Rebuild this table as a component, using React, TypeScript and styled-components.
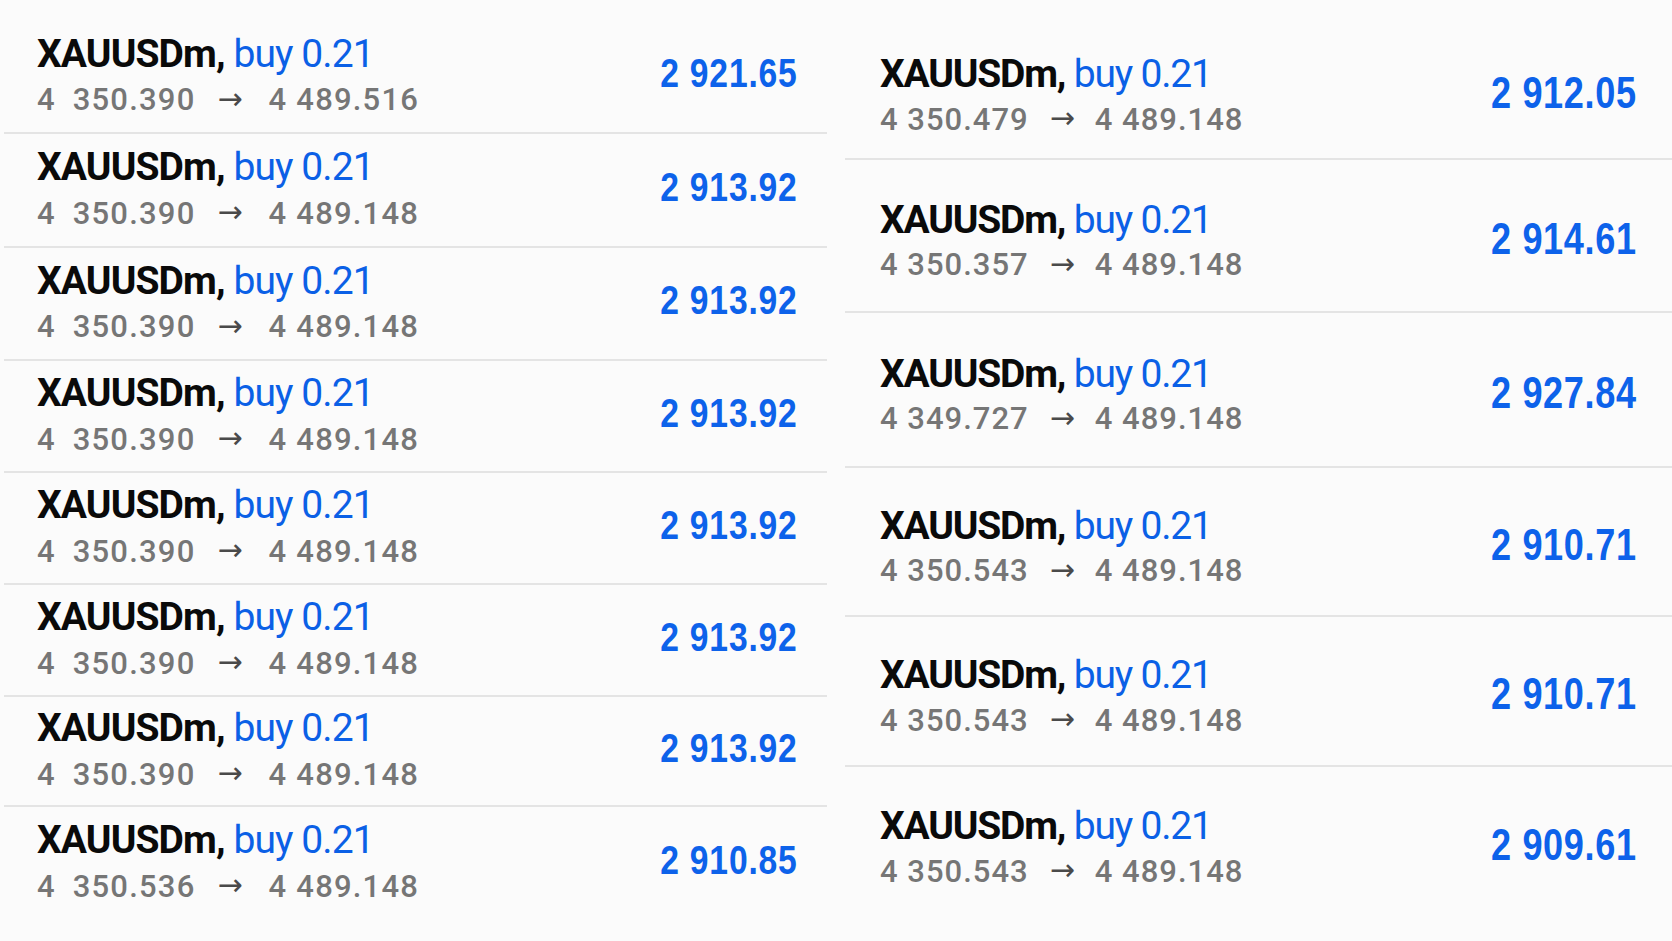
import styled, { createGlobalStyle } from "styled-components";

interface Trade {
  open: string;
  close: string;
  profit: string;
}

const leftTrades: Trade[] = [
  { open: "4 350.390", close: "4 489.516", profit: "2 921.65" },
  { open: "4 350.390", close: "4 489.148", profit: "2 913.92" },
  { open: "4 350.390", close: "4 489.148", profit: "2 913.92" },
  { open: "4 350.390", close: "4 489.148", profit: "2 913.92" },
  { open: "4 350.390", close: "4 489.148", profit: "2 913.92" },
  { open: "4 350.390", close: "4 489.148", profit: "2 913.92" },
  { open: "4 350.390", close: "4 489.148", profit: "2 913.92" },
  { open: "4 350.536", close: "4 489.148", profit: "2 910.85" },
];
const leftHeights = [113, 114, 113, 112, 112, 112, 110, 112];

const rightTrades: Trade[] = [
  { open: "4 350.479", close: "4 489.148", profit: "2 912.05" },
  { open: "4 350.357", close: "4 489.148", profit: "2 914.61" },
  { open: "4 349.727", close: "4 489.148", profit: "2 927.84" },
  { open: "4 350.543", close: "4 489.148", profit: "2 910.71" },
  { open: "4 350.543", close: "4 489.148", profit: "2 910.71" },
  { open: "4 350.543", close: "4 489.148", profit: "2 909.61" },
];
const rightHeights = [138, 153, 155, 149, 150, 150];

export default function App() {
  return (
    <>
      <GlobalStyle />
      <Page>
        <Column $side="left">
          {leftTrades.map((t, i) => (
            <TradeRow key={i} trade={t} height={leftHeights[i]} wide />
          ))}
        </Column>
        <Column $side="right">
          {rightTrades.map((t, i) => (
            <TradeRow key={i} trade={t} height={rightHeights[i]} />
          ))}
        </Column>
      </Page>
    </>
  );
}

function TradeRow({
  trade,
  height,
  wide,
}: {
  trade: Trade;
  height: number;
  wide?: boolean;
}) {
  return (
    <Row $height={height} $wide={!!wide}>
      <div className="info">
        <Title $wide={!!wide}>
          XAUUSDm, <span>buy 0.21</span>
        </Title>
        <Prices $wide={!!wide}>
          <Price $wide={!!wide}>{trade.open}</Price>
          <Arrow $wide={!!wide}>→</Arrow>
          <Price>{trade.close}</Price>
        </Prices>
      </div>
      <Profit $wide={!!wide}>{trade.profit}</Profit>
    </Row>
  );
}

const GlobalStyle = createGlobalStyle`
  html, body {
    margin: 0;
    padding: 0;
    background: #fbfbfb;
    font-family: Roboto, "Liberation Sans", sans-serif;
  }
`;

const Page = styled.div`
  display: flex;
  width: 1672px;
  height: 941px;
  overflow: hidden;
  background: #fbfbfb;
`;

const Column = styled.div<{ $side: "left" | "right" }>`
  display: flex;
  flex-direction: column;
  box-sizing: border-box;
  width: ${(p) => (p.$side === "left" ? "823px" : "827px")};
  margin-left: ${(p) => (p.$side === "left" ? "4px" : "18px")};
  padding-top: ${(p) => (p.$side === "left" ? "21px" : "22px")};
`;

const Row = styled.div<{ $height: number; $wide: boolean }>`
  display: flex;
  align-items: center;
  justify-content: space-between;
  box-sizing: border-box;
  height: ${(p) => p.$height}px;
  flex: none;
  padding: ${(p) => (p.$wide ? "0 29px 0 33px" : "12px 35px 0 35px")};
  border-bottom: 2px solid #e4e4e4;

  &:last-child {
    border-bottom: none;
  }

  .info {
    display: flex;
    flex-direction: column;
  }
`;

const Title = styled.div<{ $wide: boolean }>`
  font-size: 39px;
  line-height: 46px;
  font-weight: 700;
  color: #0a0a0a;
  letter-spacing: ${(p) => (p.$wide ? "-0.9px" : "-1.2px")};
  white-space: nowrap;

  span {
    font-weight: 400;
    color: #0b60e6;
  }
`;

const Prices = styled.div<{ $wide: boolean }>`
  display: flex;
  align-items: center;
  height: ${(p) => (p.$wide ? "46px" : "44px")};
  font-size: 31px;
  font-weight: 500;
  color: #767676;
  letter-spacing: ${(p) => (p.$wide ? "1.2px" : "1px")};
  white-space: nowrap;
`;

const Price = styled.span<{ $wide?: boolean }>`
  word-spacing: ${(p) => (p.$wide ? "8px" : "0")};
`;

const Arrow = styled.span<{ $wide: boolean }>`
  margin: ${(p) => (p.$wide ? "0 26px 0 22px" : "0 20px 0 21px")};
  font-family: "DejaVu Sans", sans-serif;
  font-size: 30px;
  font-weight: 400;
  letter-spacing: 0;
  color: #4a4a4a;
  line-height: 1;
  position: relative;
  top: -1px;
`;

const Profit = styled.div<{ $wide: boolean }>`
  margin-top: -6px;
  font-family: "Liberation Sans", Arial, sans-serif;
  font-size: ${(p) => (p.$wide ? "41px" : "44px")};
  font-weight: 700;
  color: #0d62ea;
  letter-spacing: ${(p) => (p.$wide ? "1px" : "0.8px")};
  white-space: nowrap;
  transform: scaleX(0.82);
  transform-origin: right center;
`;
